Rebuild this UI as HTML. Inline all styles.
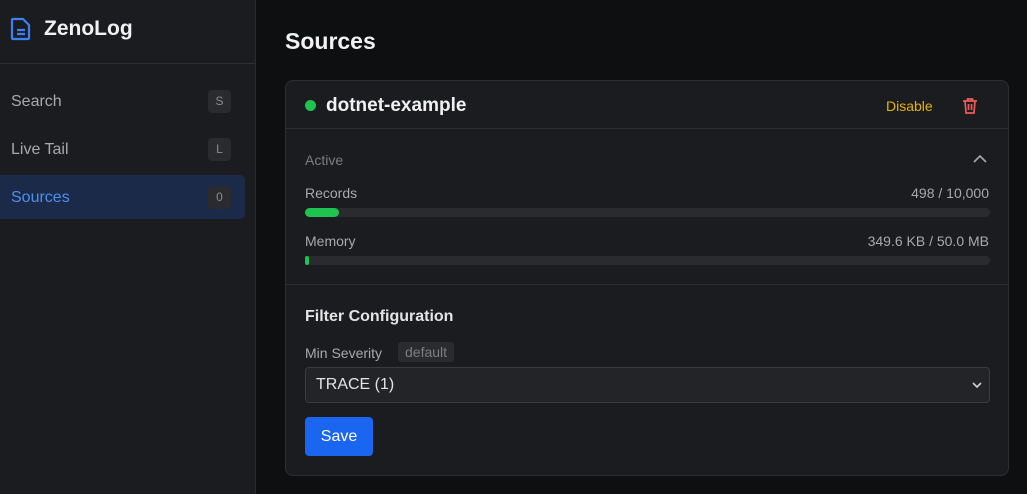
<!DOCTYPE html>
<html><head><style>
*{box-sizing:border-box;margin:0;padding:0}
body{width:1027px;height:494px;overflow:hidden;background:#0e0f11;font-family:"Liberation Sans",sans-serif;position:relative}
.sb{position:absolute;left:0;top:0;width:256px;height:494px;background:#1b1c1f;border-right:1px solid #2a2b2f}
.logo{height:64px;border-bottom:1px solid #2e2f33;display:flex;align-items:center;padding-left:10px;padding-bottom:6px}
.logo b{color:#f1f1f2;font-size:21px;margin-left:12px}
.nav{position:absolute;left:0;width:245px;height:44px;display:flex;align-items:center;justify-content:space-between;padding:0 14px 0 11px;font-size:16px;color:#a8a9ad;border-radius:0 5px 5px 0}
.nav>span:first-child{position:relative;top:1px}
.k{width:23px;height:23px;background:#2a2b2f;border-radius:4px;font-size:12px;color:#8b8c90;display:flex;align-items:center;justify-content:center}
.act{background:#1a2a48;color:#4a90f0}
h1{position:absolute;left:285px;top:28px;color:#f1f1f2;font-size:23px}
.card{position:absolute;left:285px;top:80px;width:724px;height:396px;background:#1b1c1f;border:1px solid #2e2f33;border-radius:8px}
.t{position:absolute;font-size:14px;color:#a8a9ad}
.bar{position:absolute;left:19px;width:685px;height:9px;border-radius:5px;background:#2a2b2f}
.bar i{display:block;height:9px;border-radius:5px;background:#1ec44f}
</style></head><body>
<div class="sb">
<div class="logo"><svg width="22" height="24" viewBox="0 0 22 24"><path d="M3 2h10l6 6v13a1 1 0 0 1-1 1H3a1 1 0 0 1-1-1V3a1 1 0 0 1 1-1z" fill="none" stroke="#3b82f6" stroke-width="2.2" stroke-linejoin="round"/><path d="M7 13h8M7 17h8" stroke="#3b82f6" stroke-width="2.2"/></svg><b>ZenoLog</b></div>
<div class="nav" style="top:79px"><span>Search</span><span class="k">S</span></div>
<div class="nav" style="top:127px"><span>Live Tail</span><span class="k">L</span></div>
<div class="nav act" style="top:175px"><span>Sources</span><span class="k">0</span></div>
</div>
<h1>Sources</h1>
<div class="card">
<div style="position:absolute;left:19px;top:19px;width:11px;height:11px;border-radius:50%;background:#1ec44f"></div>
<div style="position:absolute;left:40px;top:14px;font-size:19px;color:#f1f1f2;font-weight:bold">dotnet-example</div>
<div style="position:absolute;left:600px;top:17px;font-size:14px;color:#e8b400">Disable</div>
<svg style="position:absolute;left:676px;top:16px" width="16" height="18" viewBox="0 0 16 18" fill="none" stroke="#f05a5a" stroke-width="1.7"><path d="M1 4h14M5.5 4V2h5v2M3 4l1 12h8l1-12M6.5 7v6M9.5 7v6"/></svg>
<div style="position:absolute;left:0;top:47px;width:722px;border-top:1px solid #2e2f33"></div>
<div class="t" style="left:19px;top:71px;color:#7d7e82">Active</div>
<svg style="position:absolute;left:687px;top:73px" width="14" height="9"><path d="M1 8l6-6 6 6" fill="none" stroke="#a8a9ad" stroke-width="1.6"/></svg>
<div class="t" style="left:19px;top:104px">Records</div>
<div class="t" style="right:19px;top:104px">498 / 10,000</div>
<div class="bar" style="top:127px"><i style="width:34px"></i></div>
<div class="t" style="left:19px;top:152px">Memory</div>
<div class="t" style="right:19px;top:152px">349.6 KB / 50.0 MB</div>
<div class="bar" style="top:175px"><i style="width:4px"></i></div>
<div style="position:absolute;left:0;top:203px;width:722px;border-top:1px solid #2e2f33"></div>
<div style="position:absolute;left:19px;top:227px;font-size:16px;font-weight:bold;color:#e4e4e6">Filter Configuration</div>
<div class="t" style="left:19px;top:264px">Min Severity</div>
<div style="position:absolute;left:112px;top:261px;background:#2a2b2f;color:#7d7e82;font-size:14px;padding:2px 7px;border-radius:3px">default</div>
<div style="position:absolute;left:19px;top:286px;width:685px;height:36px;background:#232427;border:1px solid #3a3b3f;border-radius:4px;color:#e4e4e6;font-size:16px;padding:8px 10px">TRACE (1)</div>
<svg style="position:absolute;left:686px;top:301px" width="10" height="7"><path d="M1 1l4 4 4-4" fill="none" stroke="#d0d0d3" stroke-width="1.6"/></svg>
<div style="position:absolute;left:19px;top:336px;width:68px;height:39px;background:#1a66f0;border-radius:4px;color:#fff;font-size:16px;display:flex;align-items:center;justify-content:center">Save</div>
</div>
</body></html>
